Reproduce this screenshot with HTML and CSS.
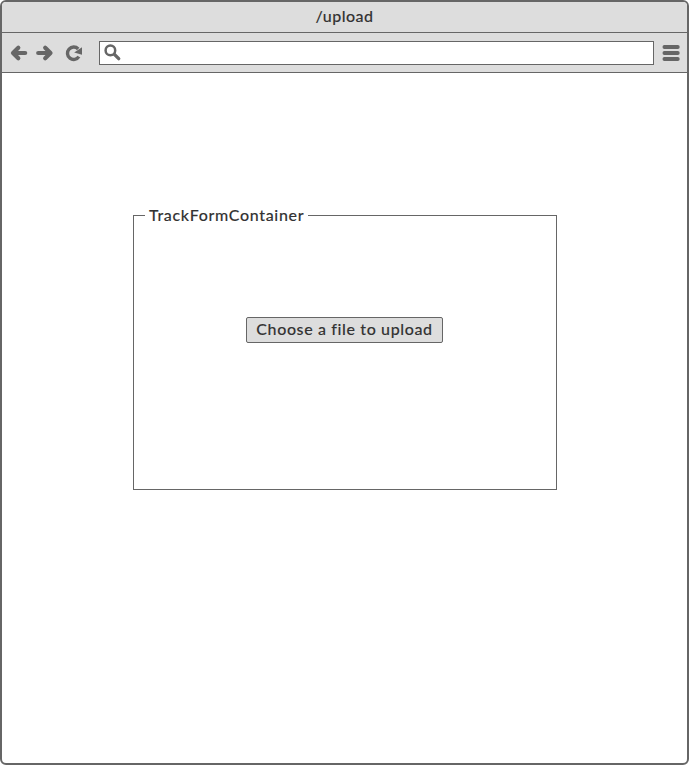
FILE: index.html
```html
<!DOCTYPE html>
<html lang="en">
<head>
<meta charset="utf-8">
<title>/upload</title>
<link rel="stylesheet" href="styles.css">
</head>
<body>
<div class="window">
  <header class="titlebar"><span class="title">/upload</span></header>
  <nav class="toolbar">
    <svg class="icon back" width="18" height="18" viewBox="0 0 18 18"><path d="M8.3 3.7 3 9l5.3 5.3M4 9h11.2"/></svg>
    <svg class="icon forward" width="18" height="18" viewBox="0 0 18 18"><path d="M9.2 3.7 14.5 9l-5.3 5.3M13.5 9H2.2"/></svg>
    <svg class="icon reload" width="18" height="18" viewBox="0 0 18 18"><path d="M13.9 12.6A6.2 6.2 0 1 1 13.2 5"/><path class="solid" d="M17 3.2v7.6L9.2 8.6z"/></svg>
    <div class="address">
      <svg class="icon" width="18" height="18" viewBox="0 0 18 18"><circle cx="6.4" cy="6.4" r="4.8"/><path class="handle" d="M10.4 10.4l4.3 4.2"/></svg>
    </div>
    <svg class="icon menu" width="20" height="18" viewBox="0 0 20 18"><path d="M3.4 3h13.4M3.4 9h13.4M3.4 15h13.4"/></svg>
  </nav>
  <main class="page">
    <fieldset class="container">
      <legend><span class="name">TrackFormContainer</span></legend>
      <button class="choose" type="button"><span class="label">Choose a file to upload</span></button>
    </fieldset>
  </main>
</div>
</body>
</html>
```
FILE: styles.css
```css
* { box-sizing: border-box; }
body {
  margin: 0;
  background: #fff;
  color: #333;
  font: 500 16px/20px Lato, "Liberation Sans", sans-serif;
  -webkit-text-stroke: 0.1px #333;
}
.window {
  display: flex;
  flex-direction: column;
  height: 765px;
  border: 2px solid #666;
  border-radius: 6px;
  overflow: hidden;
}
.titlebar {
  height: 31px;
  padding-top: 4px;
  border-bottom: 1px solid #666;
  background: #ddd;
  text-align: center;
}
.title { letter-spacing: 0.5px; }
.toolbar {
  display: flex;
  align-items: center;
  height: 40px;
  padding: 0 6px 0 8px;
  border-bottom: 1px solid #666;
  background: #ddd;
}
.icon {
  flex: none;
  fill: none;
  stroke: #666;
  stroke-width: 4.2;
  stroke-linecap: round;
  stroke-linejoin: round;
}
.forward { margin-left: 8px; }
.reload { margin-left: 11px; stroke-width: 3.4; stroke-linecap: butt; }
.solid { fill: #666; stroke: none; }
.menu { stroke-width: 3.8; }
.address {
  display: flex;
  flex: 1;
  align-items: center;
  height: 24px;
  margin: 0 7px 0 16px;
  padding-left: 4px;
  border: 1px solid #666;
  background: #fff;
}
.address .icon { stroke-width: 2.5; }
.address .handle { stroke-width: 3.4; }
.page { flex: 1; padding: 132px 130px 0 131px; }
.container {
  height: 285px;
  margin: 0;
  padding: 92px 1px 0 0;
  border: 1px solid #666;
  text-align: center;
}
legend {
  width: 163px;
  margin-left: 11px;
  padding: 0 0 0 4px;
  text-align: left;
  white-space: nowrap;
}
.name { letter-spacing: 0.67px; }
.choose {
  width: 197px;
  height: 26px;
  padding: 0 0 2px;
  border: 1px solid #666;
  border-radius: 2px;
  background: #ddd;
  color: inherit;
  font: inherit;
  white-space: nowrap;
  -webkit-text-stroke: inherit;
}
.label { letter-spacing: 0.63px; }
```
